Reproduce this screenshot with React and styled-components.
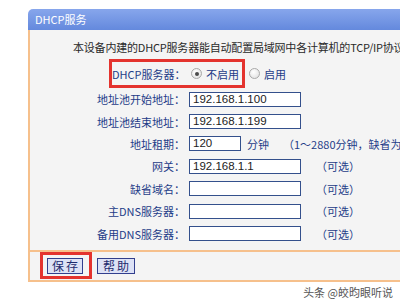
import React from "react";
import styled, { createGlobalStyle } from "styled-components";

const Global = createGlobalStyle`
  html, body { margin: 0; padding: 0; background: #ffffff; overflow: hidden; }
  body { width: 400px; height: 300px; font-family: "Noto Sans CJK SC", "Liberation Sans", sans-serif; }
`;

const Page = styled.div`
  width: 400px;
  height: 300px;
  padding: 9px 0 0 28px;
  box-sizing: border-box;
  overflow: hidden;
`;

const Panel = styled.div`
  width: 420px;
`;

const Header = styled.div`
  height: 21px;
  display: flex;
  align-items: center;
  padding-left: 7px;
  border-radius: 5px 0 0 0;
  background: linear-gradient(#87a6ec, #6489dd);
  color: #ffffff;
  font-size: 11px;
  line-height: 1;
`;

const Body = styled.div`
  border-left: 2px solid #f6c08c;
  background: #f4f4f4;
  padding: 10px 0 5px 0;
`;

const Desc = styled.div`
  padding-left: 43px;
  font-size: 11px;
  line-height: 14px;
  height: 14px;
  color: #2a2a2a;
  white-space: nowrap;
  letter-spacing: -0.2px;
`;

const DhcpRow = styled.div`
  display: flex;
  align-items: center;
  margin-top: 5px;
`;

const Highlight = styled.div`
  display: flex;
  align-items: center;
  border: 3px solid #e4332e;
  margin-left: ${(p) => p.$left}px;
  padding: ${(p) => p.$pad};
  height: ${(p) => p.$h}px;
  box-sizing: border-box;
`;

const Label = styled.span`
  width: ${(p) => p.$w}px;
  flex: none;
  text-align: right;
  font-size: 11px;
  line-height: 14px;
  color: #1e3c88;
  white-space: nowrap;
`;

const Radio = styled.span`
  width: 11px;
  height: 11px;
  box-sizing: border-box;
  flex: none;
  border-radius: 50%;
  border: 1px solid #a9a9a9;
  background: radial-gradient(circle at 40% 35%, #ffffff, #dcdcdc);
  margin-left: ${(p) => p.$ml}px;
  display: flex;
  align-items: center;
  justify-content: center;
  &::after {
    content: "";
    display: ${(p) => (p.$checked ? "block" : "none")};
    width: 4px;
    height: 4px;
    border-radius: 50%;
    background: #4a4a4a;
  }
`;

const Option = styled.span`
  margin-left: 4px;
  font-size: 11px;
  line-height: 14px;
  color: #1e3c88;
  white-space: nowrap;
`;

const Row = styled.div`
  display: flex;
  align-items: center;
  height: 22.4px;
`;

const Field = styled.div`
  width: ${(p) => p.$w}px;
  height: 15px;
  box-sizing: border-box;
  margin-left: 4px;
  flex: none;
  border: 1px solid #34508c;
  background: #ffffff;
  font-family: "Liberation Sans", Arial, sans-serif;
  font-size: 11.5px;
  line-height: 13px;
  color: #1c1c1c;
  padding-left: 3px;
`;

const Hint = styled.span`
  margin-left: ${(p) => p.$ml}px;
  font-size: 11px;
  line-height: 14px;
  color: #1e3c88;
  white-space: nowrap;
`;

const Footer = styled.div`
  display: flex;
  align-items: center;
  height: 28px;
  border-top: 2px solid #f6c08c;
  border-bottom: 2px solid #f6c08c;
  border-left: 2px solid #f6c08c;
  background: #f4f4f4;
`;

const Button = styled.span`
  display: inline-flex;
  align-items: center;
  justify-content: center;
  width: ${(p) => p.$w}px;
  height: 16px;
  box-sizing: border-box;
  margin-left: ${(p) => p.$ml}px;
  border: 1px solid #323f8e;
  background: #dde2f6;
  color: #1d2b6e;
  font-size: 12px;
  line-height: 1;
  letter-spacing: 2px;
  padding-left: 2px;
`;

const Watermark = styled.div`
  padding: 3px 7px 0 0;
  text-align: right;
  font-size: 11px;
  line-height: 14px;
  color: #555555;
`;

const rows = [
  { label: "地址池开始地址：", value: "192.168.1.100", w: 112 },
  { label: "地址池结束地址：", value: "192.168.1.199", w: 112 },
  { label: "地址租期：", value: "120", w: 52, extra: ["分钟", 6, "（1～2880分钟，缺省为120分钟）", 14] },
  { label: "网关：", value: "192.168.1.1", w: 112, extra: ["（可选）", 15] },
  { label: "缺省域名：", value: "", w: 112, extra: ["（可选）", 15] },
  { label: "主DNS服务器：", value: "", w: 112, extra: ["（可选）", 15] },
  { label: "备用DNS服务器：", value: "", w: 112, extra: ["（可选）", 15] },
];

export default function App() {
  return (
    <>
      <Global />
      <Page>
        <Panel>
          <Header>DHCP服务</Header>
          <Body>
            <Desc>本设备内建的DHCP服务器能自动配置局域网中各计算机的TCP/IP协议，采用默认设置即可。</Desc>
            <DhcpRow>
              <Highlight $left={79} $pad="0 3px 0 0" $h={29}>
                <Label $w={73}>DHCP服务器：</Label>
                <Radio $ml={6} $checked />
                <Option>不启用</Option>
              </Highlight>
              <Radio $ml={4} />
              <Option>启用</Option>
            </DhcpRow>
            {rows.map((r) => (
              <Row key={r.label}>
                <Label $w={155}>{r.label}</Label>
                <Field $w={r.w}>{r.value}</Field>
                {r.extra && <Hint $ml={r.extra[1]}>{r.extra[0]}</Hint>}
                {r.extra && r.extra[2] && <Hint $ml={r.extra[3]}>{r.extra[2]}</Hint>}
              </Row>
            ))}
          </Body>
          <Footer>
            <Highlight $left={10} $pad="0 6px 0 4px" $h={27}>
              <Button $w={36} $ml={0}>保存</Button>
            </Highlight>
            <Button $w={38} $ml={5}>帮助</Button>
          </Footer>
        </Panel>
        <Watermark>头条 @皎昀眼听说</Watermark>
      </Page>
    </>
  );
}
